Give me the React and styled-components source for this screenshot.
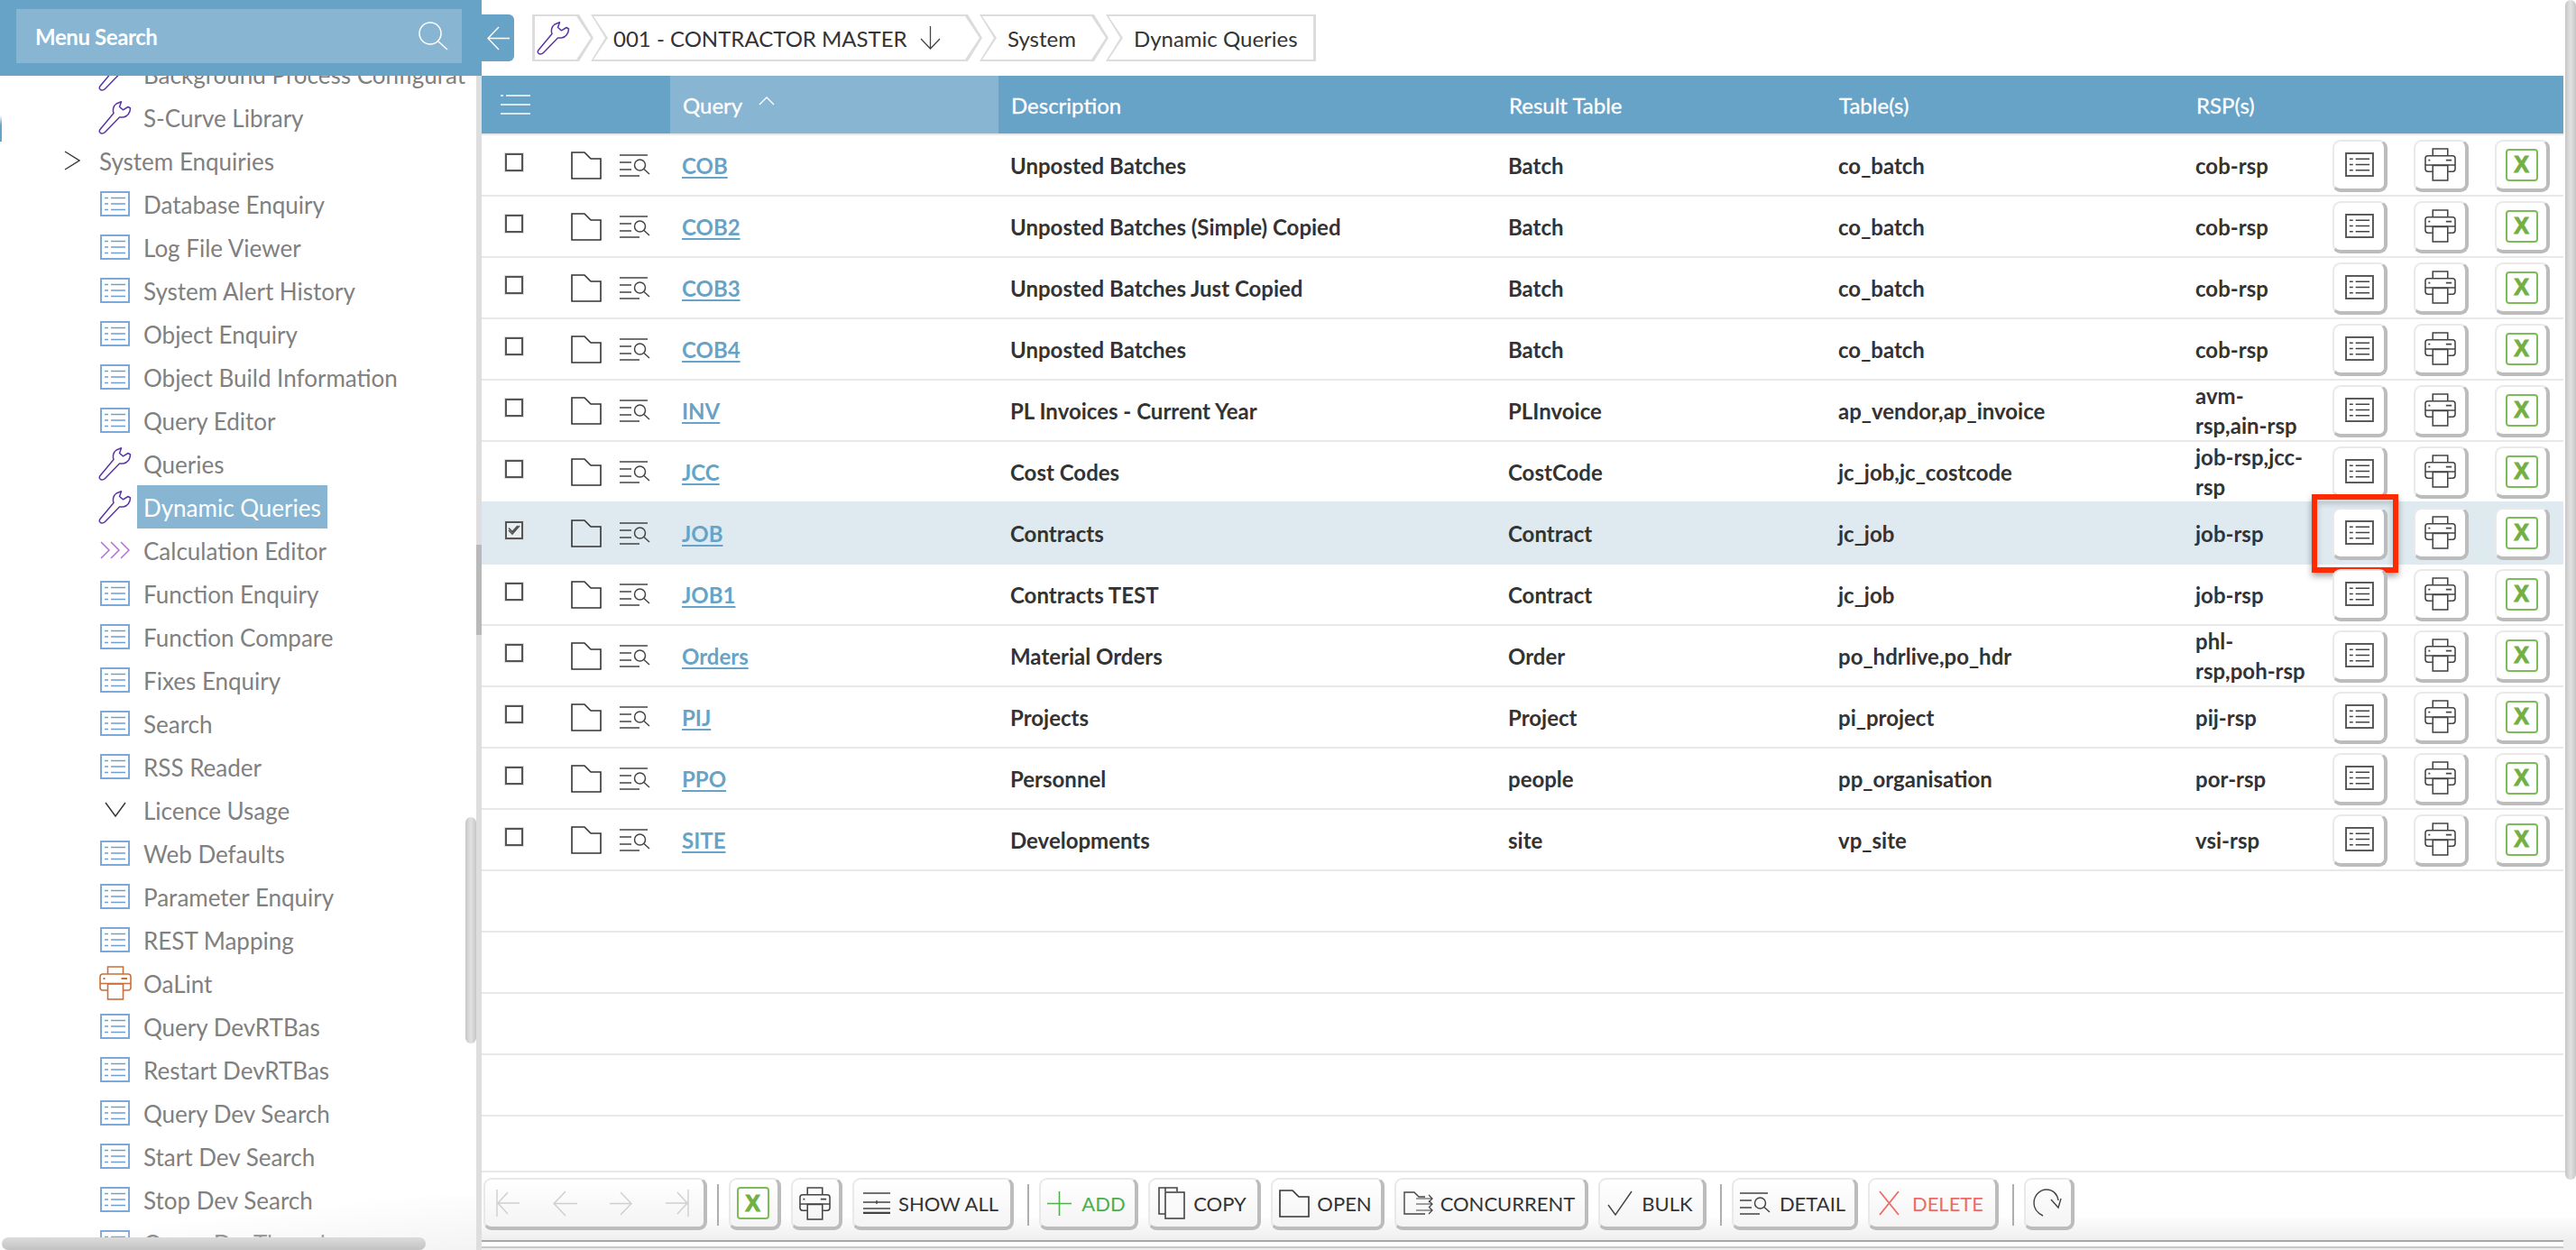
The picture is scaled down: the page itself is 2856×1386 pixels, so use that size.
import React from "react";
import styled, { createGlobalStyle, css } from "styled-components";

const Global = createGlobalStyle`
  html, body { margin: 0; padding: 0; background: #fff; }
  body { font-family: "Lato", "Liberation Sans", sans-serif; overflow: hidden; }
  * { box-sizing: border-box; }
`;

const Page = styled.div`
  display: flex;
  width: 2856px;
  height: 1386px;
  overflow: hidden;
  background: #fff;
`;

/* ---------- Sidebar ---------- */
const Sidebar = styled.aside`
  position: relative;
  display: flex;
  flex: none;
  flex-direction: column;
  width: 534px;
  height: 100%;
  border-right: 6px solid #dedede;
`;
const SideHead = styled.div`
  flex: none;
  height: 84px;
  width: 534px;
  margin-right: -6px;
  padding: 10px 22px 14px 18px;
  background: #67a3c7;
  position: relative;
  z-index: 2;
`;
const SearchBox = styled.div`
  display: flex;
  align-items: center;
  justify-content: space-between;
  height: 60px;
  padding: 0 15px 0 21px;
  background: #87b5d2;
  color: #fff;
  font-size: 24px;
  font-weight: 700;
  letter-spacing: -0.4px;
`;
const MenuClip = styled.div`
  flex: 1;
  min-height: 0;
  overflow: hidden;
  padding-right: 12px;
`;
const MenuList = styled.ul`
  list-style: none;
  margin: -26px 0 0;
  padding: 0;
`;
const MenuItem = styled.li`
  display: flex;
  align-items: center;
  height: 48px;
  padding-left: ${(p) => (p.$top ? "60px" : "109px")};
  white-space: nowrap;
  overflow: hidden;
`;
const MenuIconSlot = styled.span`
  display: flex;
  flex: none;
  align-items: center;
  justify-content: ${(p) => (p.$top ? "flex-start" : "center")};
  width: 43px;
  padding-right: 6px;
  padding-left: ${(p) => (p.$top ? "11px" : "0")};
`;
const MenuLabel = styled.span`
  display: flex;
  align-items: center;
  height: 48px;
  padding: 1px 7px 0;
  font-size: 26px;
  color: ${(p) => (p.$active ? "#fff" : "#808080")};
  background: ${(p) => (p.$active ? "#87b5d2" : "transparent")};
`;
const ScrollThumbV = styled.div`
  position: absolute;
  left: 516px;
  top: 906px;
  width: 12px;
  height: 251px;
  border-radius: 6px;
  background: linear-gradient(to right, #c6c6c6, #e2e2e2 50%, #c6c6c6);
`;
const GutterThumb = styled.div`
  position: absolute;
  left: 528px;
  top: 604px;
  width: 6px;
  height: 100px;
  background: #b9b9b9;
`;
const ScrollThumbH = styled.div`
  position: absolute;
  left: 2px;
  top: 1372px;
  width: 470px;
  height: 14px;
  border-radius: 7px;
  background: linear-gradient(to bottom, #dcdcdc, #c2c2c2);
  z-index: 3;
`;
const SideFade = styled.div`
  position: absolute;
  left: 0;
  right: 0;
  bottom: 0;
  height: 60px;
  background: linear-gradient(to bottom right, rgba(240, 240, 240, 0) 40%, rgba(236, 236, 236, 0.6));
  pointer-events: none;
`;
const EdgeMark = styled.div`
  position: absolute;
  left: 0;
  top: 84px;
  width: 2px;
  height: 73px;
  background: linear-gradient(to bottom, #fff 60%, #67a3c7 75%);
`;

/* ---------- Main ---------- */
const Main = styled.main`
  position: relative;
  display: flex;
  flex: 1;
  min-width: 0;
  flex-direction: column;
  padding-right: 12px;
`;
const TopBar = styled.div`
  flex: none;
  display: flex;
  align-items: flex-start;
  height: 84px;
  padding-top: 16px;
`;
const BackTab = styled.div`
  display: flex;
  align-items: center;
  justify-content: center;
  flex: none;
  width: 36px;
  height: 52px;
  background: #67a3c7;
  border-radius: 0 6px 6px 0;
  margin-right: 20px;
`;
const Crumbs = styled.nav`
  display: flex;
`;
const Crumb = styled.div`
  position: relative;
  display: flex;
  align-items: center;
  width: ${(p) => p.$w}px;
  height: 52px;
  padding-left: ${(p) => p.$pad}px;
  margin-left: ${(p) => (p.$first ? 0 : "-3px")};
  font-size: 24px;
  color: #333;
  isolation: isolate;
  ${(p) => {
    const left = p.$first ? "0 100%, 0 0" : "0 100%, 16px 50%, 0 0";
    const right = p.$last
      ? "100% 0, 100% 100%"
      : "calc(100% - 16px) 0, 100% 50%, calc(100% - 16px) 100%";
    const poly = `polygon(${right}, ${left})`;
    return css`
      &::before,
      &::after {
        content: "";
        position: absolute;
        z-index: -1;
        clip-path: ${poly};
      }
      &::before {
        inset: 0;
        background: #dcdcdc;
      }
      &::after {
        inset: 2px 3px;
        background: #fff;
      }
    `;
  }}
`;
const CrumbArrow = styled.span`
  display: flex;
  margin-left: 14px;
`;

const TableWrap = styled.div`
  flex: 1;
  min-height: 0;
  overflow: hidden;
  padding-right: 2px;
`;
const cols = "209px 364px 552px 366px 396px 165px 1fr";
const HeadRow = styled.div`
  display: grid;
  grid-template-columns: ${cols};
  height: 64px;
  background: #67a3c7;
  color: #fff;
  font-size: 24px;
`;
const HeadCell = styled.div`
  display: flex;
  align-items: center;
  padding-left: ${(p) => (p.$burger ? "21px" : "14px")};
  background: ${(p) => (p.$sorted ? "#87b5d2" : "transparent")};
  -webkit-text-stroke: 0.3px #fff;
`;
const SortMark = styled.span`
  display: flex;
  margin-left: 18px;
  margin-top: -8px;
`;
const Rows = styled.div`
  border-top: 2px solid #e8e8e8;
`;
const Row = styled.div`
  display: grid;
  grid-template-columns: ${cols};
  align-items: center;
  height: 68px;
  border-bottom: 2px solid ${(p) => (p.$selected ? "#deeaf0" : "#e8e8e8")};
  background: ${(p) => (p.$selected ? "#deeaf0" : "#fff")};
  box-shadow: ${(p) => (p.$selected ? "0 -2px 0 #deeaf0" : "none")};
  font-size: 24px;
  font-weight: 700;
  color: #333;
`;
const LeadCell = styled.div`
  display: flex;
  align-items: center;
  padding-left: 26px;
`;
const Check = styled.span`
  display: flex;
  align-items: center;
  justify-content: center;
  flex: none;
  width: 20px;
  height: 20px;
  margin-top: -6px;
  margin-right: 53px;
  border: 2px solid #555;
  box-shadow: 0 0 0 1px #ddd;
  background: ${(p) => (p.$on ? "#e9eef1" : "#fff")};
`;
const RowFolder = styled.span`
  display: flex;
  flex: none;
  margin-right: 20px;
`;
const QueryLink = styled.a`
  color: #67a3c7;
  text-decoration: underline;
  text-decoration-thickness: 2px;
  text-underline-offset: 3px;
`;
const TextCell = styled.div`
  padding-left: 13px;
  padding-right: ${(p) => p.$pr || 0}px;
  line-height: 33px;
`;
const ActionCell = styled.div`
  display: flex;
  gap: 29px;
  margin-top: 1px;
`;
const cardButton = css`
  position: relative;
  display: flex;
  align-items: center;
  justify-content: center;
  flex: none;
  border-style: solid;
  border-color: #e9e9e9 #bcbcbc #bcbcbc #e9e9e9;
  border-width: 2px 4px 4px 2px;
  border-radius: 9px;
`;
const RowButton = styled.div`
  ${cardButton};
  width: 61px;
  height: 58px;
  background: #fff;
`;
const RedFrame = styled.div`
  position: absolute;
  top: -17px;
  left: -25px;
  right: -16px;
  bottom: -18px;
  border: 6px solid #ff2a00;
  box-shadow: 0 4px 7px rgba(0, 0, 0, 0.35), inset 0 4px 7px rgba(0, 0, 0, 0.2);
  pointer-events: none;
`;
const ExcelMark = styled.span`
  display: flex;
  align-items: center;
  justify-content: center;
  width: 36px;
  height: 36px;
  border: 2px solid #7cbc58;
  border-radius: 4px;
  background: #fff;
  color: #72b043;
  font-family: "Liberation Sans", sans-serif;
  font-size: 25px;
  font-weight: 700;
  line-height: 1;
  -webkit-text-stroke: 1px #72b043;
`;

/* ---------- Bottom toolbar ---------- */
const Toolbar = styled.div`
  flex: none;
  display: flex;
  align-items: flex-start;
  gap: 11px;
  height: 88px;
  margin-right: -12px;
  padding: 6px 0 0 2px;
  border-top: 2px solid #e8e8e8;
  background: linear-gradient(to bottom, #fff 55%, #eee 88%, #eee 88%);
  position: relative;
  &::after {
    content: "";
    position: absolute;
    left: 0;
    right: 14px;
    top: 75px;
    height: 5px;
    border-top: 2px solid #a8a8a8;
    border-bottom: 2px solid #c9c9c9;
    background: #fff;
  }
`;
const ToolBtn = styled.div`
  ${cardButton};
  gap: ${(p) => p.$gap ?? 10}px;
  width: ${(p) => p.$w}px;
  height: 58px;
  padding-right: 3px;
  background: linear-gradient(to bottom, #fff, #f4f4f4);
  font-size: 22px;
  color: ${(p) => p.$color || "#333"};
`;
const NavArrows = styled.div`
  display: flex;
  align-items: center;
  justify-content: space-between;
  width: 100%;
  padding: 0 13px 0 12px;
`;
const Divider = styled.span`
  flex: none;
  align-self: flex-start;
  width: 2px;
  height: 46px;
  margin-top: 7px;
  margin-left: ${(p) => p.$ml || 0}px;
  background: #aeaeae;
`;
const ScrollThumbMain = styled.div`
  position: absolute;
  top: 0;
  right: 0;
  width: 12px;
  height: 1308px;
  border-radius: 6px;
  background: linear-gradient(to right, #c6c6c6, #e2e2e2 50%, #c6c6c6);
`;

/* ---------- Icons ---------- */
const Wrench = ({ size = 37, color = "#5b34a8" }) => (
  <svg width={size} height={size} viewBox="0 0 37 37" fill="none" stroke={color} strokeWidth="1.5" strokeLinejoin="round">
    <path d="M4 36C1.5 36 .5 33.500 2 31.500L17 13.500C15.500 9.500 17 5 20 3L25.500 .8L23.500 6.500L27.500 9.800L33 6.500L35.500 8C35.500 13 32 17.500 27.500 18L23.500 18L7.500 34.500C6.500 35.500 5.500 36 4 36Z" />
  </svg>
);
const ListIcon = ({ color = "#7ea8d8", line = "#6f9fd6", w = 33, h = 28, sw = 1.5 }) => (
  <svg width={w} height={h} viewBox="0 0 33 28" fill="none" stroke={line}>
    <rect x="1" y="1" width="31" height="26" stroke={color} strokeWidth={sw + 0.5} />
    <path d="M5 7.500H9M5 14H9M5 20.500H9" strokeWidth={sw} />
    <path d="M12 7.500H28M12 14H28M12 20.500H28" strokeWidth={sw} />
  </svg>
);
const Chevrons = () => (
  <svg width="33" height="20" viewBox="0 0 33 20" fill="none" stroke="#b56fd9" strokeWidth="1.5">
    <path d="M1 1L10 10L1 19M12 1L21 10L12 19M23 1L32 10L23 19" />
  </svg>
);
const Printer = ({ color = "#444", size = 35 }) => (
  <svg width={size} height={size + 2} viewBox="0 0 36 38" fill="none" stroke={color} strokeWidth="1.6">
    <path d="M9.500 9V1H26.500V9" />
    <path d="M9 27H4C2 27 1 26 1 24V12C1 10 2 9 4 9H32C34 9 35 10 35 12V24C35 26 34 27 32 27H27" />
    <rect x="9.500" y="20" width="17" height="17" />
    <path d="M1 19.500H35" />
    <path d="M4.500 14H6.500M24.500 14H31" strokeWidth="2" />
  </svg>
);
const Folder = ({ w = 34, h = 31, color = "#333" }) => (
  <svg width={w} height={h} viewBox="0 0 34 31" fill="none" stroke={color} strokeWidth="1.6">
    <path d="M1 1H15L22 8H33V30H1Z" />
  </svg>
);
const DetailIcon = ({ color = "#444" }) => (
  <svg width="34" height="25" viewBox="0 0 34 25" fill="none" stroke={color} strokeWidth="1.5">
    <path d="M0 1H31M0 9H13M0 17H13M0 24H22" />
    <circle cx="22.500" cy="12" r="6" />
    <path d="M27 16.500L33 22" />
  </svg>
);
const Burger = () => (
  <svg width="33" height="22" viewBox="0 0 33 22" fill="none" stroke="#fff" strokeWidth="1.5">
    <path d="M0 1H3M6 1H33M0 11H33M0 21H33" />
  </svg>
);
const Magnifier = () => (
  <svg width="34" height="32" viewBox="0 0 34 32" fill="none" stroke="#fff" strokeWidth="1.5">
    <circle cx="14" cy="13" r="12" />
    <path d="M23 22L33 31" />
  </svg>
);
const ArrowLeft = ({ color = "#fff", size = 25 }) => (
  <svg width={size} height={size + 2} viewBox="0 0 25 27" fill="none" stroke={color} strokeWidth="1.4">
    <path d="M25 13.500H1M13 1L1 13.500L13 26" />
  </svg>
);
const ArrowRight = ({ color }) => (
  <svg width="25" height="27" viewBox="0 0 25 27" fill="none" stroke={color} strokeWidth="1.4">
    <path d="M0 13.500H24M12 1L24 13.500L12 26" />
  </svg>
);
const FirstIcon = ({ color, flip }) => (
  <svg width="27" height="30" viewBox="0 0 27 30" fill="none" stroke={color} strokeWidth="1.4" style={flip ? { transform: "scaleX(-1)" } : undefined}>
    <path d="M1 0V30M26 15H2M13 3L2 15L13 27" />
  </svg>
);
const ArrowDown = () => (
  <svg width="23" height="26" viewBox="0 0 23 26" fill="none" stroke="#444" strokeWidth="1.3">
    <path d="M11.500 0V25M1 14L11.500 25L22 14" />
  </svg>
);
const Caret = () => (
  <svg width="18" height="22" viewBox="0 0 18 22" fill="none" stroke="#333" strokeWidth="1.4">
    <path d="M1 1L17 11L1 21" />
  </svg>
);
const VDown = () => (
  <svg width="24" height="18" viewBox="0 0 24 18" fill="none" stroke="#333" strokeWidth="1.4">
    <path d="M1 1L12 16L23 1" />
  </svg>
);
const SortUp = () => (
  <svg width="18" height="10" viewBox="0 0 18 10" fill="none" stroke="#fff" strokeWidth="1.3">
    <path d="M1 9L9 1L17 9" />
  </svg>
);
const Dbl = () => (
  <svg width="14" height="12" viewBox="0 0 14 12" fill="none" stroke="#555" strokeWidth="1.6">
    <path d="M1 6L5 10L13 1M1 3.500L5 7.500L11 1" />
  </svg>
);
const ShowAllIcon = () => (
  <svg width="30" height="24" viewBox="0 0 30 24" fill="none" stroke="#444" strokeWidth="1.4">
    <path d="M0 1H30M0 11H30M15 9V13M0 18H30" />
    <path d="M0 23H30" strokeWidth="2.500" />
  </svg>
);
const Plus = () => (
  <svg width="27" height="27" viewBox="0 0 27 27" fill="none" stroke="#50b04c" strokeWidth="1.6">
    <path d="M13.500 0V27M0 13.500H27" />
  </svg>
);
const CopyIcon = () => (
  <svg width="30" height="36" viewBox="0 0 30 36" fill="none" stroke="#444" strokeWidth="1.6">
    <path d="M8 5V1H21V5" />
    <path d="M8 30H1V1H8" />
    <rect x="8" y="6" width="21" height="29" fill="#fafafa" />
  </svg>
);
const ConcurrentIcon = () => (
  <svg width="34" height="26" viewBox="0 0 34 26" fill="none" stroke="#444" strokeWidth="1.4">
    <path d="M24 25H1V1H12L17 6H24" />
    <path d="M14 8H32M28 4L32 8L28 12M14 14H32M28 10.500L32 14L28 18M14 21H32M28 17L32 21L28 25" strokeWidth="1.2" />
  </svg>
);
const Tick = () => (
  <svg width="28" height="28" viewBox="0 0 28 28" fill="none" stroke="#444" strokeWidth="1.4">
    <path d="M1 16L9 27L27 1" />
  </svg>
);
const Cross = () => (
  <svg width="23" height="28" viewBox="0 0 23 28" fill="none" stroke="#ef6a66" strokeWidth="1.8">
    <path d="M1 1L22 27M22 1L1 27" />
  </svg>
);
const Refresh = () => (
  <svg width="32" height="32" viewBox="0 0 32 32" fill="none" stroke="#444" strokeWidth="1.4">
    <path d="M11 30C5 27 1 22 1 16C1 8 7 1 15 1C22 1 27 6 28 13" />
    <path d="M20 12L28 21L31 11" />
  </svg>
);

/* ---------- Data ---------- */
const menu = [
  ["Background Process Configuration", "wrench"],
  ["S-Curve Library", "wrench"],
  ["System Enquiries", "caret", true],
  ["Database Enquiry", "list"],
  ["Log File Viewer", "list"],
  ["System Alert History", "list"],
  ["Object Enquiry", "list"],
  ["Object Build Information", "list"],
  ["Query Editor", "list"],
  ["Queries", "wrench"],
  ["Dynamic Queries", "wrench", false, true],
  ["Calculation Editor", "chev"],
  ["Function Enquiry", "list"],
  ["Function Compare", "list"],
  ["Fixes Enquiry", "list"],
  ["Search", "list"],
  ["RSS Reader", "list"],
  ["Licence Usage", "v"],
  ["Web Defaults", "list"],
  ["Parameter Enquiry", "list"],
  ["REST Mapping", "list"],
  ["OaLint", "print"],
  ["Query DevRTBas", "list"],
  ["Restart DevRTBas", "list"],
  ["Query Dev Search", "list"],
  ["Start Dev Search", "list"],
  ["Stop Dev Search", "list"],
  ["Query DevThread", "list"],
];
const menuIcon = (k) => {
  if (k === "wrench") return <Wrench />;
  if (k === "caret") return <Caret />;
  if (k === "chev") return <Chevrons />;
  if (k === "v") return <VDown />;
  if (k === "print") return <Printer color="#c8703a" size={36} />;
  return <ListIcon />;
};

const rows = [
  ["COB", "Unposted Batches", "Batch", "co_batch", "cob-rsp"],
  ["COB2", "Unposted Batches (Simple) Copied", "Batch", "co_batch", "cob-rsp"],
  ["COB3", "Unposted Batches Just Copied", "Batch", "co_batch", "cob-rsp"],
  ["COB4", "Unposted Batches", "Batch", "co_batch", "cob-rsp"],
  ["INV", "PL Invoices - Current Year", "PLInvoice", "ap_vendor,ap_invoice", "avm-rsp,ain-rsp"],
  ["JCC", "Cost Codes", "CostCode", "jc_job,jc_costcode", "job-rsp,jcc-rsp"],
  ["JOB", "Contracts", "Contract", "jc_job", "job-rsp"],
  ["JOB1", "Contracts TEST", "Contract", "jc_job", "job-rsp"],
  ["Orders", "Material Orders", "Order", "po_hdrlive,po_hdr", "phl-rsp,poh-rsp"],
  ["PIJ", "Projects", "Project", "pi_project", "pij-rsp"],
  ["PPO", "Personnel", "people", "pp_organisation", "por-rsp"],
  ["SITE", "Developments", "site", "vp_site", "vsi-rsp"],
];
const blanks = [0, 1, 2, 3];

export default function App() {
  return (
    <Page>
      <Global />
      <Sidebar>
        <SideHead>
          <SearchBox>
            <span>Menu Search</span>
            <Magnifier />
          </SearchBox>
        </SideHead>
        <MenuClip>
          <MenuList>
            {menu.map(([label, icon, top, active]) => (
              <MenuItem key={label} $top={top}>
                <MenuIconSlot $top={top}>{menuIcon(icon)}</MenuIconSlot>
                <MenuLabel $active={active}>{label}</MenuLabel>
              </MenuItem>
            ))}
          </MenuList>
        </MenuClip>
        <EdgeMark />
        <SideFade />
        <ScrollThumbV />
        <GutterThumb />
        <ScrollThumbH />
      </Sidebar>
      <Main>
        <TopBar>
          <BackTab>
            <ArrowLeft />
          </BackTab>
          <Crumbs>
            <Crumb $first $w={68} $pad={5}>
              <Wrench size={37} />
            </Crumb>
            <Crumb $w={434} $pad={25}>
              001 - CONTRACTOR MASTER
              <CrumbArrow>
                <ArrowDown />
              </CrumbArrow>
            </Crumb>
            <Crumb $w={143} $pad={31}>System</Crumb>
            <Crumb $last $w={233} $pad={31}>Dynamic Queries</Crumb>
          </Crumbs>
        </TopBar>
        <TableWrap>
          <HeadRow>
            <HeadCell $burger>
              <Burger />
            </HeadCell>
            <HeadCell $sorted>
              Query
              <SortMark>
                <SortUp />
              </SortMark>
            </HeadCell>
            <HeadCell>Description</HeadCell>
            <HeadCell>Result Table</HeadCell>
            <HeadCell>Table(s)</HeadCell>
            <HeadCell>RSP(s)</HeadCell>
            <HeadCell />
          </HeadRow>
          <Rows>
            {rows.map(([q, d, r, t, s]) => {
              const selected = q === "JOB";
              return (
                <Row key={q} $selected={selected}>
                  <LeadCell>
                    <Check $on={selected}>{selected && <Dbl />}</Check>
                    <RowFolder>
                      <Folder />
                    </RowFolder>
                    <DetailIcon />
                  </LeadCell>
                  <TextCell>
                    <QueryLink>{q}</QueryLink>
                  </TextCell>
                  <TextCell>{d}</TextCell>
                  <TextCell>{r}</TextCell>
                  <TextCell>{t}</TextCell>
                  <TextCell $pr={22}>{s}</TextCell>
                  <ActionCell>
                    <RowButton>
                      <ListIcon color="#555" line="#444" w={32} h={27} />
                      {selected && <RedFrame />}
                    </RowButton>
                    <RowButton>
                      <Printer />
                    </RowButton>
                    <RowButton>
                      <ExcelMark>X</ExcelMark>
                    </RowButton>
                  </ActionCell>
                </Row>
              );
            })}
            {blanks.map((b) => (
              <Row key={b} />
            ))}
          </Rows>
        </TableWrap>
        <Toolbar>
          <ToolBtn $w={248}>
            <NavArrows>
              <FirstIcon color="#cfcfcf" />
              <ArrowLeft color="#cfcfcf" size={27} />
              <ArrowRight color="#cfcfcf" />
              <FirstIcon color="#cfcfcf" flip />
            </NavArrows>
          </ToolBtn>
          <Divider />
          <ToolBtn $w={58}>
            <ExcelMark>X</ExcelMark>
          </ToolBtn>
          <ToolBtn $w={57}>
            <Printer />
          </ToolBtn>
          <ToolBtn $w={179} $gap={9}>
            <ShowAllIcon />
            SHOW ALL
          </ToolBtn>
          <Divider $ml={4} />
          <ToolBtn $w={110} $gap={11} $color="#4cae4a">
            <Plus />
            ADD
          </ToolBtn>
          <ToolBtn $w={125} $gap={9}>
            <CopyIcon />
            COPY
          </ToolBtn>
          <ToolBtn $w={126} $gap={8}>
            <Folder />
            OPEN
          </ToolBtn>
          <ToolBtn $w={215} $gap={7}>
            <ConcurrentIcon />
            CONCURRENT
          </ToolBtn>
          <ToolBtn $w={120}>
            <Tick />
            BULK
          </ToolBtn>
          <Divider $ml={4} />
          <ToolBtn $w={140}>
            <DetailIcon />
            DETAIL
          </ToolBtn>
          <ToolBtn $w={145} $gap={14} $color="#ef6a66">
            <Cross />
            DELETE
          </ToolBtn>
          <Divider $ml={4} />
          <ToolBtn $w={56}>
            <Refresh />
          </ToolBtn>
        </Toolbar>
        <ScrollThumbMain />
      </Main>
    </Page>
  );
}
